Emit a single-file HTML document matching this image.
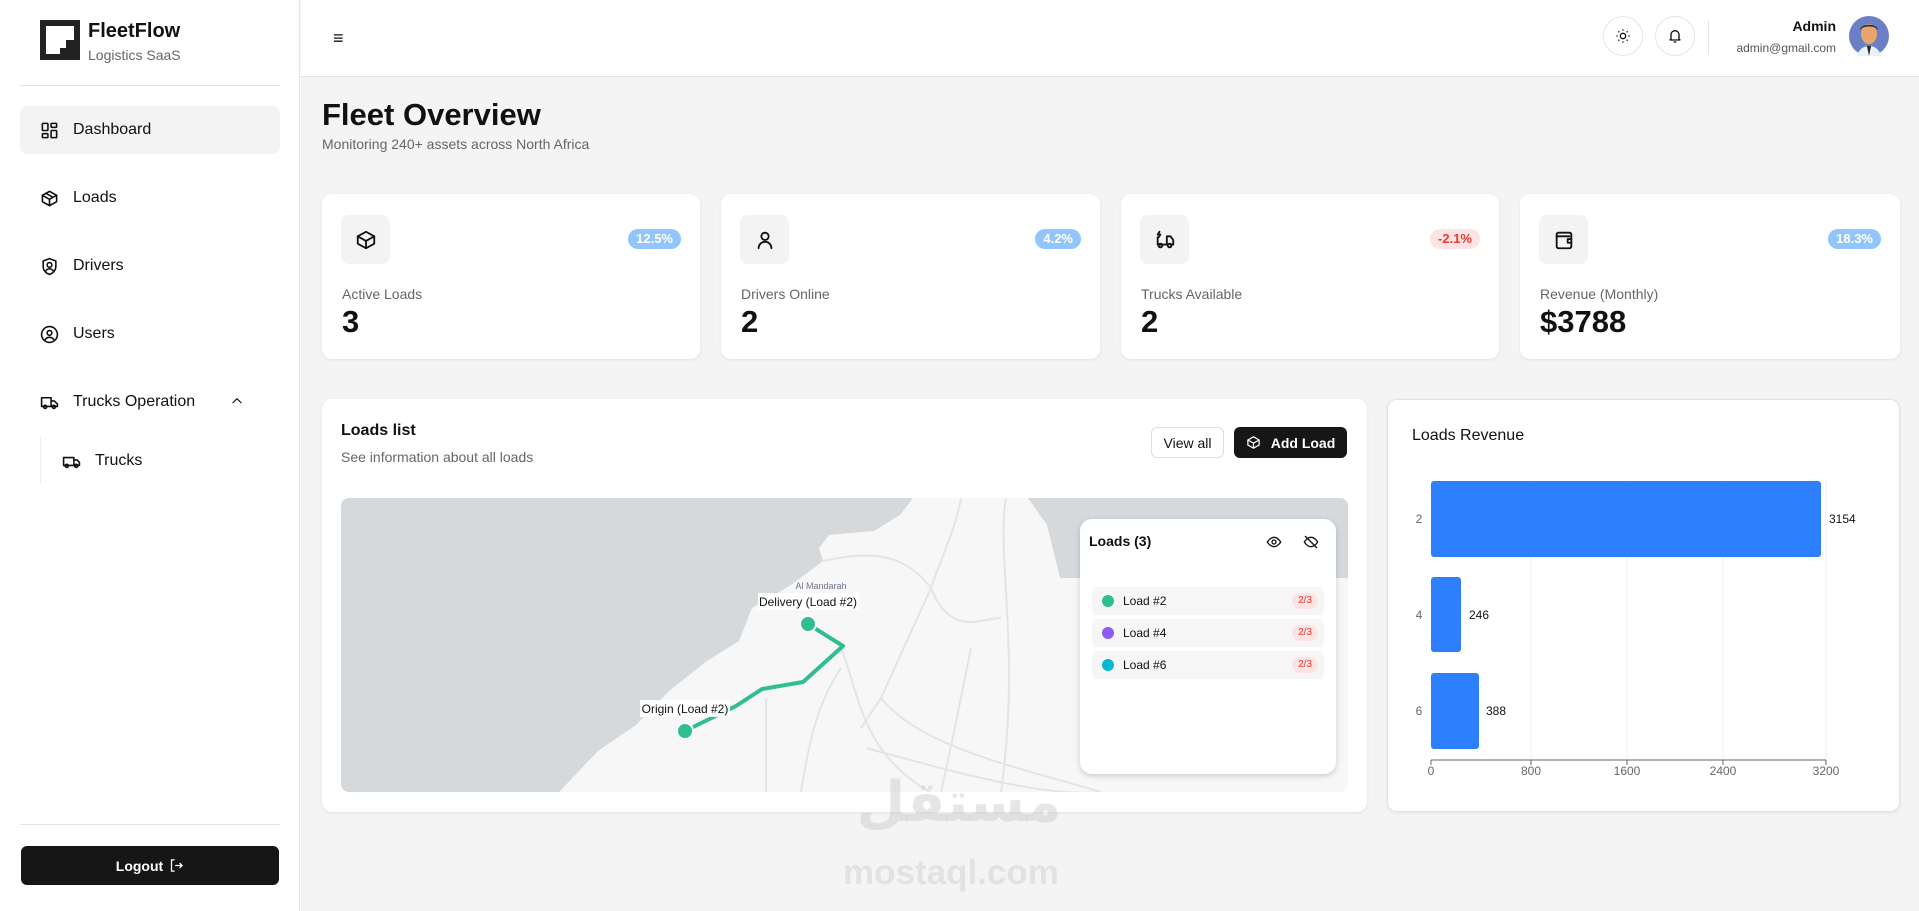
<!DOCTYPE html>
<html><head><meta charset="utf-8"><style>
*{box-sizing:border-box;margin:0;padding:0}
body{width:1919px;height:911px;overflow:hidden;background:#f4f4f4;font-family:"Liberation Sans",Arial,sans-serif;color:#111;position:relative}
.abs{position:absolute}
.side{left:0;top:0;width:300px;height:911px;background:#fff;border-right:1px solid #e5e5e5}
.nav{position:absolute;left:20px;width:260px;height:48px;border-radius:8px;display:flex;align-items:center;padding-left:20px;font-size:16px;color:#111}
.nav svg{width:19px;height:19px;margin-right:14px;fill:none;stroke:#111;stroke-width:2;stroke-linecap:round;stroke-linejoin:round}
.card{background:#fff;border-radius:10px;box-shadow:0 1px 3px rgba(0,0,0,.08)}
.ibox{position:absolute;left:19px;top:21px;width:49px;height:49px;border-radius:8px;background:#f3f3f3;display:flex;align-items:center;justify-content:center}
.ibox svg{width:22px;height:22px;fill:none;stroke:#111;stroke-width:2;stroke-linecap:round;stroke-linejoin:round}
.badge{position:absolute;top:35px;right:19px;height:20px;padding:0 8px;border-radius:10px;font-size:13px;font-weight:bold;line-height:20px;color:#fff;background:#93c5fd}
.badge.r{background:#fde4e4;color:#e53935}
.lbl{position:absolute;left:20px;top:92px;font-size:14px;color:#666}
.val{position:absolute;left:20px;top:110px;font-size:31px;font-weight:bold;color:#111}
.row{position:absolute;left:12px;width:232px;height:28px;background:#f6f6f6;border-radius:6px;font-size:12px;display:flex;align-items:center;padding-left:10px}
.row i{width:12px;height:12px;border-radius:50%;margin-right:9px;display:inline-block}
.row b{position:absolute;right:6px;top:6px;height:16px;padding:0 6px;border-radius:8px;background:#fde4e4;color:#e53935;font-size:10px;font-weight:normal;line-height:16px}
</style></head><body>
<div class="abs side">
  <svg class="abs" style="left:40px;top:20px" width="40" height="40" viewBox="0 0 40 40"><rect width="40" height="40" fill="#222"/><path d="M6 6h28v14h-8v8h-6v6H6z" fill="#fff"/></svg>
  <div class="abs" style="left:88px;top:20px;font-size:20px;font-weight:bold">FleetFlow</div>
  <div class="abs" style="left:88px;top:47px;font-size:14px;color:#666">Logistics SaaS</div>
  <div class="abs" style="left:20px;top:85px;width:260px;height:1px;background:#e5e5e5"></div>
  <div class="nav" style="top:106px;background:#f3f3f3"><svg viewBox="0 0 24 24"><rect x="3" y="3" width="7" height="9" rx="1"/><rect x="14" y="3" width="7" height="5" rx="1"/><rect x="14" y="12" width="7" height="9" rx="1"/><rect x="3" y="16" width="7" height="5" rx="1"/></svg>Dashboard</div>
  <div class="nav" style="top:174px"><svg viewBox="0 0 24 24"><path d="M21 8l-9-5-9 5v8l9 5 9-5z"/><path d="M3 8l9 5 9-5M12 13v8M7.5 5.5l9 5"/></svg>Loads</div>
  <div class="nav" style="top:242px"><svg viewBox="0 0 24 24"><path d="M12 2l8 3v7c0 5-4 9-8 10-4-1-8-5-8-10V5z"/><circle cx="12" cy="10" r="3"/><path d="M7 18c1-2 3-3 5-3s4 1 5 3"/></svg>Drivers</div>
  <div class="nav" style="top:310px"><svg viewBox="0 0 24 24"><circle cx="12" cy="12" r="10"/><circle cx="12" cy="10" r="3"/><path d="M6.5 18.5c1.5-2 3.5-3 5.5-3s4 1 5.5 3"/></svg>Users</div>
  <div class="nav" style="top:378px"><svg viewBox="0 0 24 24"><path d="M2 6h12v11H2zM14 10h4l4 4v3h-8"/><circle cx="6.5" cy="17.5" r="2"/><circle cx="17.5" cy="17.5" r="2"/></svg>Trucks Operation<svg style="position:absolute;right:22px;top:16px;width:14px;height:14px" viewBox="0 0 24 24"><path d="M5 15l7-7 7 7"/></svg></div>
  <div class="abs" style="left:40px;top:437px;width:1px;height:47px;background:#eee"></div>
  <div class="nav" style="top:437px;left:42px;width:230px"><svg viewBox="0 0 24 24"><path d="M2 7h13v10H2zM15 10h4l3 3v4h-7"/><circle cx="6" cy="17.5" r="2"/><circle cx="18" cy="17.5" r="2"/></svg>Trucks</div>
  <div class="abs" style="left:20px;top:824px;width:260px;height:1px;background:#e5e5e5"></div>
  <div class="abs" style="left:21px;top:846px;width:258px;height:39px;background:#161616;border-radius:6px;color:#fff;font-size:14px;font-weight:bold;display:flex;align-items:center;justify-content:center">Logout <svg style="margin-left:6px" width="15" height="15" viewBox="0 0 24 24" fill="none" stroke="#fff" stroke-width="2"><path d="M9 3H4v18h5M10 12h11M17 8l4 4-4 4"/></svg></div>
</div>
<div class="abs" style="left:301px;top:0;width:1618px;height:77px;background:#fff;border-bottom:1px solid #e3e3e3">
  <div class="abs" style="left:32px;top:28px;font-size:18px">&#8801;</div>
  <div class="abs" style="left:1302px;top:16px;width:40px;height:40px;border-radius:50%;border:1px solid #e5e5e5;display:flex;align-items:center;justify-content:center"><svg width="16" height="16" viewBox="0 0 24 24" fill="none" stroke="#111" stroke-width="2"><circle cx="12" cy="12" r="4"/><path d="M12 2v2M12 20v2M2 12h2M20 12h2M5 5l1.5 1.5M17.5 17.5L19 19M5 19l1.5-1.5M17.5 6.5L19 5"/></svg></div>
  <div class="abs" style="left:1354px;top:16px;width:40px;height:40px;border-radius:50%;border:1px solid #e5e5e5;display:flex;align-items:center;justify-content:center"><svg width="16" height="16" viewBox="0 0 24 24" fill="none" stroke="#111" stroke-width="2"><path d="M6 17V10a6 6 0 0112 0v7l2 1H4zM10 21h4"/></svg></div>
  <div class="abs" style="left:1407px;top:20px;width:1px;height:34px;background:#e5e5e5"></div>
  <div class="abs" style="right:83px;top:18px;font-size:14px;font-weight:bold">Admin</div>
  <div class="abs" style="right:83px;top:41px;font-size:12px;color:#555">admin@gmail.com</div>
  <svg class="abs" style="left:1548px;top:16px" width="40" height="40" viewBox="0 0 40 40"><circle cx="20" cy="20" r="20" fill="#6b7fc7"/><path d="M8 40c2-8 8-10 12-10s10 2 12 10z" fill="#e8f2fb"/><ellipse cx="20" cy="18" rx="8" ry="10" fill="#e9a56e"/><path d="M11 14c0-7 18-7 18 0l-2-2c-4-2-10-2-14 0z" fill="#333"/><path d="M18 30l2 10 2-10z" fill="#222"/></svg>
</div>
<div class="abs" style="left:322px;top:97px;font-size:31px;font-weight:bold">Fleet Overview</div>
<div class="abs" style="left:322px;top:136px;font-size:14px;color:#666">Monitoring 240+ assets across North Africa</div>

<div class="abs card" style="left:322px;top:194px;width:378px;height:165px">
  <div class="ibox"><svg viewBox="0 0 24 24"><path d="M21 8l-9-5-9 5v8l9 5 9-5z"/><path d="M3 8l9 5 9-5M12 13v8"/></svg></div>
  <div class="badge">12.5%</div><div class="lbl">Active Loads</div><div class="val">3</div></div>
<div class="abs card" style="left:721px;top:194px;width:379px;height:165px">
  <div class="ibox"><svg viewBox="0 0 24 24"><circle cx="12" cy="8" r="4"/><path d="M5 21c0-4 3-7 7-7s7 3 7 7"/></svg></div>
  <div class="badge">4.2%</div><div class="lbl">Drivers Online</div><div class="val">2</div></div>
<div class="abs card" style="left:1121px;top:194px;width:378px;height:165px">
  <div class="ibox"><svg viewBox="0 0 24 24"><path d="M4 9v8h10V8h4l3 4v5h-3M6 3l-2 3h3l-2 3"/><circle cx="7" cy="18" r="2"/><circle cx="17" cy="18" r="2"/></svg></div>
  <div class="badge r">-2.1%</div><div class="lbl">Trucks Available</div><div class="val">2</div></div>
<div class="abs card" style="left:1520px;top:194px;width:380px;height:165px">
  <div class="ibox"><svg viewBox="0 0 24 24"><rect x="4" y="4" width="16" height="17" rx="2"/><path d="M4 8h14M20 11h-4v4h4"/></svg></div>
  <div class="badge">18.3%</div><div class="lbl">Revenue (Monthly)</div><div class="val">$3788</div></div>

<div class="abs card" style="left:322px;top:399px;width:1045px;height:413px">
  <div class="abs" style="left:19px;top:23px;font-size:16px;font-weight:bold">Loads list</div>
  <div class="abs" style="left:19px;top:50px;font-size:14px;color:#666">See information about all loads</div>
  <div class="abs" style="left:829px;top:28px;width:73px;height:31px;border:1px solid #ddd;border-radius:6px;font-size:14px;display:flex;align-items:center;justify-content:center">View all</div>
  <div class="abs" style="left:912px;top:28px;width:113px;height:31px;background:#161616;border-radius:6px;font-size:14px;font-weight:bold;color:#fff;display:flex;align-items:center;justify-content:center"><svg style="margin-right:10px" width="15" height="15" viewBox="0 0 24 24" fill="none" stroke="#fff" stroke-width="2"><path d="M21 8l-9-5-9 5v8l9 5 9-5z"/><path d="M3 8l9 5 9-5M12 13v8"/></svg>Add Load</div>
  <div class="abs" style="left:19px;top:99px;width:1007px;height:294px;border-radius:8px;overflow:hidden;background:#f7f7f7">
    <svg width="1007" height="294" viewBox="0 0 1007 294" style="position:absolute;left:0;top:0">
      <path d="M0 0H572L559 17 533 33 488 37 478 50 482 63 450 87 411 110 398 143 366 163 328 193 295 227 257 253 218 294H0Z" fill="#d5d9dc"/>
      <path d="M687 0H1007V80H719L706 27Z" fill="#d5d9dc"/>
      <g fill="none" stroke="#e4e4e4" stroke-width="2">
        <path d="M620 0C615 30 600 60 590 90L540 200 520 230"/><path d="M665 0C655 60 680 150 660 294"/>
        <path d="M500 150C520 200 520 260 600 300"/><path d="M600 330"/><path d="M525 250C600 270 700 300 760 294"/>
        <path d="M540 200C580 250 680 270 760 294"/><path d="M460 294C470 230 480 200 500 170"/>
        <path d="M590 90C610 140 640 120 660 120"/><path d="M482 63C520 55 560 50 590 90"/><path d="M425 294V200"/><path d="M630 150C620 200 610 250 600 294"/>
      </g>
      <polyline points="467,126 502,148 462,184 421,191 395,208 344,233" fill="none" stroke="#2fbf8a" stroke-width="4" stroke-linejoin="round"/>
      <circle cx="467" cy="126" r="8" fill="#2fbf8a" stroke="#fff" stroke-width="2"/>
      <circle cx="344" cy="233" r="8" fill="#2fbf8a" stroke="#fff" stroke-width="2"/>
      <text x="480" y="91" font-size="9" fill="#6e7390" text-anchor="middle" font-family="Liberation Sans">Al Mandarah</text>
      <rect x="417" y="95" width="101" height="17" fill="#fff" opacity=".9"/><text x="467" y="108" font-size="12" fill="#111" text-anchor="middle" font-family="Liberation Sans">Delivery (Load #2)</text>
      <rect x="299" y="202" width="90" height="17" fill="#fff" opacity=".9"/><text x="344" y="215" font-size="12" fill="#111" text-anchor="middle" font-family="Liberation Sans">Origin (Load #2)</text>
    </svg>
    <div class="abs" style="left:739px;top:21px;width:256px;height:255px;background:#fff;border-radius:12px;box-shadow:0 2px 6px rgba(0,0,0,.18)">
      <div class="abs" style="left:9px;top:14px;font-size:14px;font-weight:bold">Loads (3)</div>
      <svg class="abs" style="left:186px;top:15px" width="16" height="16" viewBox="0 0 24 24" fill="none" stroke="#111" stroke-width="2"><path d="M2 12s4-7 10-7 10 7 10 7-4 7-10 7S2 12 2 12z"/><circle cx="12" cy="12" r="3"/></svg>
      <svg class="abs" style="left:223px;top:15px" width="16" height="16" viewBox="0 0 24 24" fill="none" stroke="#111" stroke-width="2"><path d="M2 12s4-7 10-7 10 7 10 7-4 7-10 7S2 12 2 12zM3 3l18 18"/></svg>
      <div class="row" style="top:68px"><i style="background:#2fbf8a"></i>Load #2<b>2/3</b></div>
      <div class="row" style="top:100px"><i style="background:#8b5cf6"></i>Load #4<b>2/3</b></div>
      <div class="row" style="top:132px"><i style="background:#06b6d4"></i>Load #6<b>2/3</b></div>
    </div>
  </div>
</div>

<div class="abs card" style="left:1387px;top:399px;width:513px;height:413px;border:1px solid #e3e3e3">
  <div class="abs" style="left:24px;top:27px;font-size:16px">Loads Revenue</div>
  <svg class="abs" style="left:0;top:0" width="513" height="413" viewBox="0 0 513 413">
    <g stroke="#eee"><line x1="143" y1="80" x2="143" y2="360"/><line x1="239" y1="80" x2="239" y2="360"/><line x1="335" y1="80" x2="335" y2="360"/><line x1="438" y1="80" x2="438" y2="360"/></g>
    <rect x="43" y="81" width="390" height="76" rx="3" fill="#2d7ffe"/>
    <rect x="43" y="177" width="30" height="75" rx="3" fill="#2d7ffe"/>
    <rect x="43" y="273" width="48" height="76" rx="3" fill="#2d7ffe"/>
    <line x1="43" y1="360" x2="438" y2="360" stroke="#666"/>
    <g stroke="#666"><line x1="43" y1="360" x2="43" y2="365"/><line x1="143" y1="360" x2="143" y2="365"/><line x1="239" y1="360" x2="239" y2="365"/><line x1="335" y1="360" x2="335" y2="365"/><line x1="438" y1="360" x2="438" y2="365"/></g>
    <g font-family="Liberation Sans" font-size="12" fill="#666" text-anchor="middle"><text x="43" y="375">0</text><text x="143" y="375">800</text><text x="239" y="375">1600</text><text x="335" y="375">2400</text><text x="438" y="375">3200</text>
    <text x="31" y="123">2</text><text x="31" y="219">4</text><text x="31" y="315">6</text></g>
    <g font-family="Liberation Sans" font-size="12" fill="#111"><text x="441" y="123">3154</text><text x="81" y="219">246</text><text x="98" y="315">388</text></g>
  </svg>
</div>
<div class="abs" style="left:842px;top:775px;width:234px;text-align:center;font-family:'DejaVu Sans',sans-serif;font-size:56px;font-weight:bold;color:rgba(200,200,200,.45);line-height:1">مستقل</div>
<div class="abs" style="left:843px;top:853px;font-size:35px;font-weight:bold;color:#e2e2e2">mostaql.com</div>
</body></html>
